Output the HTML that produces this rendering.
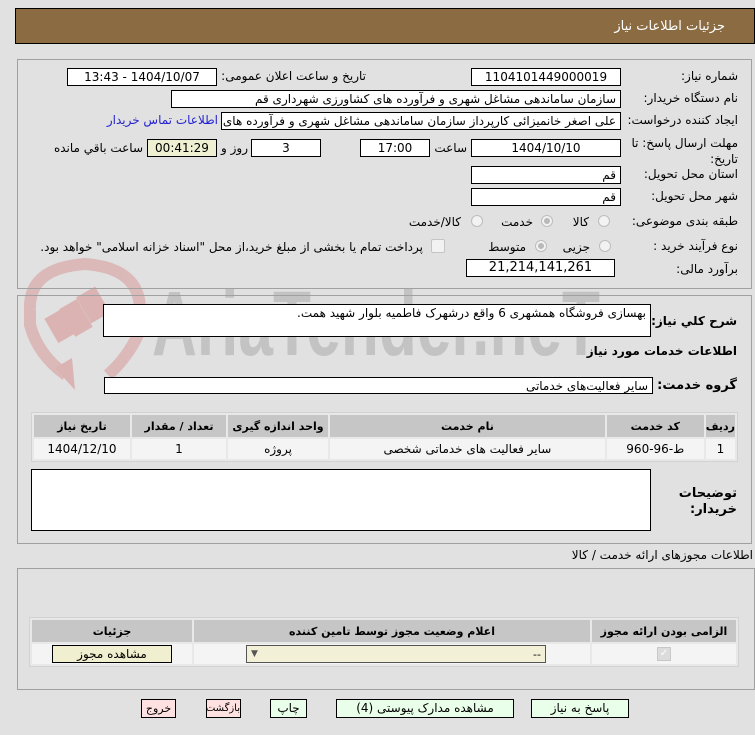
<!DOCTYPE html>
<html><head><meta charset="utf-8">
<style>
body{margin:0;width:755px;height:735px;background:#e1e1e1;font-family:"DejaVu Sans","Liberation Sans",sans-serif;font-size:12px;color:#000;position:relative;overflow:hidden}
.a{position:absolute;white-space:nowrap}
.box{position:absolute;background:#fff;border:1px solid #000;box-sizing:border-box;direction:rtl;padding:0 4px;line-height:16px;overflow:hidden;white-space:nowrap}
.c{text-align:center}
.lbl{position:absolute;direction:rtl;white-space:nowrap;text-align:right}
.panel{position:absolute;border:1px solid #a0a0a0;box-sizing:border-box}
.rad{position:absolute;width:12px;height:12px;border-radius:50%;border:1px solid #bdbdbd;background:#f2f2f2;box-sizing:border-box}
.rad.on::after{content:"";position:absolute;left:2px;top:2px;width:6px;height:6px;border-radius:50%;background:#b9b9b9}
table{border-collapse:separate;border-spacing:2px;position:absolute;background:#e8e8e8;border:1px solid #d2d2d2}
th{background:#c6c6c6;font-weight:bold;height:22px;padding:0;font-size:11px;white-space:nowrap}
td{background:#f4f4f4;text-align:center;height:20px;padding:0}
.btn{position:absolute;border:1px solid #000;box-sizing:border-box;text-align:center;line-height:17px;background:#eaffea;direction:rtl;white-space:nowrap;overflow:hidden}
.pink{background:#ffe1e1;font-size:11px}
</style></head><body>

<!-- watermark -->
<svg class="a" style="left:0;top:250px" width="700" height="150">
 <g fill="none" stroke="#dbb3b3" stroke-width="12" opacity="0.85">
  <path d="M30,60 Q28,18 85,14 Q140,18 140,60 L140,80 Q130,105 108,125"/>
  <path d="M30,60 L30,75 Q38,105 66,125"/>
 </g>
 <polygon points="55,118 75,140 72,108" fill="#dbb3b3"/>
 <g fill="#dbb3b3"><rect x="50" y="62" width="20" height="28" transform="rotate(-30 60 76)"/><rect x="66" y="52" width="20" height="32" transform="rotate(-30 76 68)"/><rect x="82" y="40" width="22" height="30" transform="rotate(-30 93 55)"/></g>
 <text x="152" y="105" font-family="Liberation Sans" font-weight="bold" font-size="92" fill="#c3c3c3" textLength="448" lengthAdjust="spacingAndGlyphs">AriaTender.neT</text>
</svg>

<!-- header -->
<div class="a" style="left:15px;top:8px;width:740px;height:36px;background:#8b6c42;border:1px solid #000;box-sizing:border-box"></div>
<div class="lbl" style="right:30px;top:19px;color:#fff;font-size:13px">جزئیات اطلاعات نیاز</div>

<!-- panel1 -->
<div class="panel" style="left:17px;top:59px;width:735px;height:230px"></div>
<div class="lbl" style="right:17px;top:69px">شماره نیاز:</div>
<div class="box c" style="left:471px;top:68px;width:150px;height:18px">1104101449000019</div>
<div class="lbl" style="right:389px;top:69px">تاریخ و ساعت اعلان عمومی:</div>
<div class="box c" style="left:67px;top:68px;width:150px;height:18px">1404/10/07 - 13:43</div>

<div class="lbl" style="right:17px;top:91px">نام دستگاه خریدار:</div>
<div class="box" style="left:171px;top:90px;width:450px;height:18px">سازمان ساماندهی مشاغل شهری و فرآورده های کشاورزی شهرداری قم</div>

<div class="lbl" style="right:17px;top:113px">ایجاد کننده درخواست:</div>
<div class="box" style="left:221px;top:112px;width:400px;height:18px">علی اصغر خانمیزائی کارپرداز سازمان ساماندهی مشاغل شهری و فرآورده های</div>
<div class="lbl" style="right:537px;top:113px;color:#2323d0">اطلاعات تماس خریدار</div>

<div class="lbl" style="right:17px;top:136px">مهلت ارسال پاسخ: تا</div>
<div class="lbl" style="right:17px;top:152px">تاریخ:</div>
<div class="box c" style="left:471px;top:139px;width:150px;height:18px">1404/10/10</div>
<div class="lbl" style="right:288px;top:141px">ساعت</div>
<div class="box c" style="left:360px;top:139px;width:70px;height:18px">17:00</div>
<div class="box c" style="left:251px;top:139px;width:70px;height:18px">3</div>
<div class="lbl" style="right:507px;top:141px">روز و</div>
<div class="box c" style="left:147px;top:139px;width:70px;height:18px;background:#efefd2">00:41:29</div>
<div class="lbl" style="right:612px;top:141px">ساعت باقي مانده</div>

<div class="lbl" style="right:17px;top:167px">استان محل تحویل:</div>
<div class="box" style="left:471px;top:166px;width:150px;height:18px">قم</div>
<div class="lbl" style="right:17px;top:189px">شهر محل تحویل:</div>
<div class="box" style="left:471px;top:188px;width:150px;height:18px">قم</div>

<div class="lbl" style="right:17px;top:214px">طبقه بندی موضوعی:</div>
<div class="rad" style="left:598px;top:215px"></div><div class="lbl" style="right:166px;top:215px">کالا</div>
<div class="rad on" style="left:541px;top:215px"></div><div class="lbl" style="right:222px;top:215px">خدمت</div>
<div class="rad" style="left:471px;top:215px"></div><div class="lbl" style="right:294px;top:215px">کالا/خدمت</div>

<div class="lbl" style="right:17px;top:239px">نوع فرآیند خرید :</div>
<div class="rad" style="left:599px;top:240px"></div><div class="lbl" style="right:165px;top:240px">جزیی</div>
<div class="rad on" style="left:535px;top:240px"></div><div class="lbl" style="right:229px;top:240px">متوسط</div>
<div class="a" style="left:431px;top:239px;width:12px;height:12px;border:1px solid #c4c4c4;background:#f2f2f2;border-radius:2px"></div>
<div class="lbl" style="right:332px;top:240px">پرداخت تمام یا بخشی از مبلغ خرید،از محل "اسناد خزانه اسلامی" خواهد بود.</div>

<div class="lbl" style="right:17px;top:262px">برآورد مالی:</div>
<div class="box c" style="left:466px;top:259px;width:149px;height:18px;font-size:13px">21,214,141,261</div>

<!-- panel2 -->
<div class="panel" style="left:17px;top:295px;width:735px;height:249px"></div>
<div class="lbl" style="right:18px;top:314px;font-weight:bold">شرح كلي نياز:</div>
<div class="box" style="left:103px;top:304px;width:548px;height:33px;background:#fff">بهسازی فروشگاه همشهری 6 واقع درشهرک فاطمیه بلوار شهید همت.</div>
<div class="lbl" style="right:18px;top:344px;font-weight:bold">اطلاعات خدمات مورد نیاز</div>
<div class="lbl" style="right:18px;top:378px;font-weight:bold;font-size:13px">گروه خدمت:</div>
<div class="box" style="left:104px;top:377px;width:549px;height:17px">سایر فعالیت‌های خدماتی</div>

<table style="left:31px;top:412px;width:707px;direction:rtl">
<tr><th style="width:26px">ردیف</th><th style="width:97px">کد خدمت</th><th>نام خدمت</th><th style="width:100px">واحد اندازه گیری</th><th style="width:94px">تعداد / مقدار</th><th style="width:96px">تاریخ نیاز</th></tr>
<tr><td>1</td><td>ط-96-960</td><td>سایر فعالیت های خدماتی شخصی</td><td>پروژه</td><td>1</td><td>1404/12/10</td></tr>
</table>

<div class="box" style="left:31px;top:469px;width:620px;height:62px"></div>
<div class="lbl" style="right:18px;top:486px;font-weight:bold;font-size:13px">توضیحات</div>
<div class="lbl" style="right:18px;top:502px;font-weight:bold;font-size:13px">خریدار:</div>

<!-- panel3 -->
<div class="lbl" style="right:2px;top:548px">اطلاعات مجوزهای ارائه خدمت / کالا</div>
<div class="panel" style="left:17px;top:568px;width:738px;height:122px"></div>
<table style="left:29px;top:617px;width:710px;direction:rtl">
<tr><th style="width:144px">الزامی بودن ارائه مجوز</th><th>اعلام وضعیت مجوز توسط تامین کننده</th><th style="width:160px">جزئیات</th></tr>
<tr><td><span style="display:inline-block;width:12px;height:12px;background:#dcdcdc;border:1px solid #c8c8c8;vertical-align:middle;color:#fff;font-size:10px;line-height:12px">✓</span></td>
<td><div style="margin:0 auto 0 52px;width:300px;height:18px;border:1px solid #555;background:#f3f0d8;box-sizing:border-box;display:flex;justify-content:space-between;align-items:center;padding:0 4px;direction:rtl;font-size:11px"><span>--</span><span style="color:#555;font-size:9px">▼</span></div></td>
<td><div style="margin:0 auto;width:120px;height:18px;border:1px solid #000;background:#f0efcf;box-sizing:border-box;line-height:16px">مشاهده مجوز</div></td></tr>
</table>

<!-- buttons -->
<div class="btn" style="left:531px;top:699px;width:98px;height:19px">پاسخ به نیاز</div>
<div class="btn" style="left:336px;top:699px;width:178px;height:19px">مشاهده مدارک پیوستی (4)</div>
<div class="btn" style="left:270px;top:699px;width:37px;height:19px">چاپ</div>
<div class="btn pink" style="left:206px;top:699px;width:35px;height:19px;font-size:10px">بازگشت</div>
<div class="btn pink" style="left:141px;top:699px;width:35px;height:19px">خروج</div>
</body></html>
